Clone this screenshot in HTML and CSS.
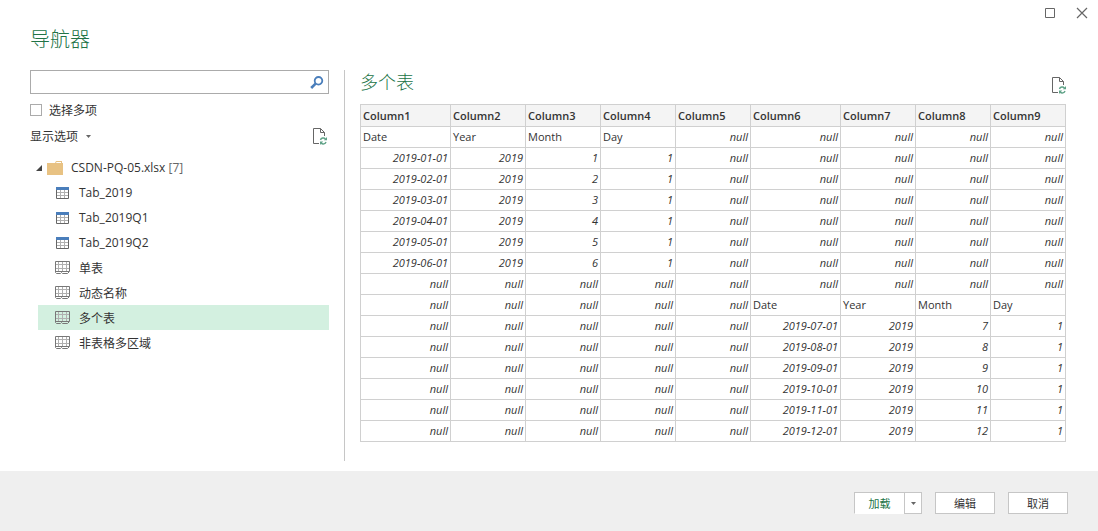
FILE: index.html
```html
<!DOCTYPE html>
<html lang="zh-CN">
<head>
    <meta charset="UTF-8">
    <meta name="viewport" content="width=device-width, initial-scale=1.0">
    <title>导航器</title>
    <link rel="stylesheet" href="styles.css">
</head>
<body>
    <!-- Icons -->
    <svg class="sprite" aria-hidden="true">
        <symbol id="icon-refresh" viewBox="0 0 14 17">
            <path d="M6 15.5H.5V.5H7.5L11.5 4.5V8M7.5 .5V4.5H11.5" fill="none" stroke="#666"/>
            <path d="M7.5 12C8 9.8 11 9.2 12.4 11M13 14C12.4 16 9.6 16.6 8.2 15" fill="none" stroke="#5fa287" stroke-width="1.4"/>
            <path d="M14 9V12.2H10.8ZM7 17V13.6H10.2Z" fill="#5fa287"/>
        </symbol>
        <symbol id="icon-table" viewBox="0 0 13 12">
            <path d="M1 5.5H12M1 8.5H12M4.5 3V11M8.5 3V11" stroke="#b0b0b0" fill="none"/>
            <path d="M.5 3V11.5H12.5V3" stroke="#666" fill="none"/>
            <path d="M0 0H13V3H0Z" fill="#4a7ebb"/>
        </symbol>
        <symbol id="icon-sheet" viewBox="0 0 15 13">
            <path d="M1 3.5H14M1 7.5H14M3.5 1V11M7.5 1V11M11.5 1V11" stroke="#b0b0b0" fill="none"/>
            <path d="M.5 .5H14.5V10.5L12.5 12.5H7.5L6.5 11.5L5.5 12.5H1.5L.5 11.5ZM1 10.5H14" stroke="#777" fill="none"/>
        </symbol>
        <symbol id="icon-down" viewBox="0 0 5 3">
            <path d="M0 0H5L2.5 3Z" fill="#666"/>
        </symbol>
    </svg>

    <header class="titlebar">
        <h1>导航器</h1>
        <div class="window-buttons">
            <button type="button" aria-label="最大化">
                <svg width="10" height="10" viewBox="0 0 10 10"><path d="M.5 .5H9.5V9.5H.5Z" fill="none" stroke="#666"/></svg>
            </button>
            <button type="button" aria-label="关闭">
                <svg width="12" height="12" viewBox="0 0 12 12"><path d="M1 1L11 11M11 1L1 11" fill="none" stroke="#666" stroke-width="1.2"/></svg>
            </button>
        </div>
    </header>

    <main class="main">
        <aside class="sidebar">
            <form class="search">
                <input type="text" aria-label="搜索">
                <button type="submit" aria-label="搜索">
                    <svg width="14" height="13" viewBox="0 0 14 13"><g fill="none" stroke="#4a7ebb"><circle cx="8.5" cy="4.8" r="3.8" stroke-width="1.8"/><path d="M5.6 7.6L1.2 12" stroke-width="2.6"/></g></svg>
                </button>
            </form>
            <label class="multi"><input type="checkbox">选择多项</label>
            <div class="options">
                <button type="button" class="options-menu">显示选项 <svg width="5" height="3"><use href="#icon-down"/></svg></button>
                <button type="button" aria-label="刷新"><svg width="14" height="17"><use href="#icon-refresh"/></svg></button>
            </div>
            <ul class="tree">
                <li class="folder">
                    <svg class="arrow" width="6" height="6" viewBox="0 0 6 6"><path d="M6 0V6H0Z" fill="#444"/></svg>
                    <svg width="16" height="14" viewBox="0 0 16 14"><path d="M0 2H8L9 0H15V2H16V14H0Z" fill="#e8c283"/><path d="M9 2L9.5 1H14V2Z" fill="#fff"/></svg>
                    <span>CSDN-PQ-05.xlsx <span class="count">[7]</span></span>
                </li>
                <li><svg class="icon-table" width="13" height="12"><use href="#icon-table"/></svg>Tab_2019</li>
                <li><svg class="icon-table" width="13" height="12"><use href="#icon-table"/></svg>Tab_2019Q1</li>
                <li><svg class="icon-table" width="13" height="12"><use href="#icon-table"/></svg>Tab_2019Q2</li>
                <li><svg width="15" height="13"><use href="#icon-sheet"/></svg>单表</li>
                <li><svg width="15" height="13"><use href="#icon-sheet"/></svg>动态名称</li>
                <li class="selected"><svg width="15" height="13"><use href="#icon-sheet"/></svg>多个表</li>
                <li><svg width="15" height="13"><use href="#icon-sheet"/></svg>非表格多区域</li>
            </ul>
        </aside>

        <section class="preview">
            <div class="preview-head">
                <h2>多个表</h2>
                <button type="button" aria-label="刷新"><svg width="14" height="17"><use href="#icon-refresh"/></svg></button>
            </div>
            <table>
                <colgroup>
                    <col class="wide"><col><col><col><col><col class="wide"><col><col><col>
                </colgroup>
                <thead>
                    <tr><th>Column1</th><th>Column2</th><th>Column3</th><th>Column4</th><th>Column5</th><th>Column6</th><th>Column7</th><th>Column8</th><th>Column9</th></tr>
                </thead>
                <tbody>
                    <tr><td class="text">Date</td><td class="text">Year</td><td class="text">Month</td><td class="text">Day</td><td>null</td><td>null</td><td>null</td><td>null</td><td>null</td></tr>
                    <tr><td>2019-01-01</td><td>2019</td><td>1</td><td>1</td><td>null</td><td>null</td><td>null</td><td>null</td><td>null</td></tr>
                    <tr><td>2019-02-01</td><td>2019</td><td>2</td><td>1</td><td>null</td><td>null</td><td>null</td><td>null</td><td>null</td></tr>
                    <tr><td>2019-03-01</td><td>2019</td><td>3</td><td>1</td><td>null</td><td>null</td><td>null</td><td>null</td><td>null</td></tr>
                    <tr><td>2019-04-01</td><td>2019</td><td>4</td><td>1</td><td>null</td><td>null</td><td>null</td><td>null</td><td>null</td></tr>
                    <tr><td>2019-05-01</td><td>2019</td><td>5</td><td>1</td><td>null</td><td>null</td><td>null</td><td>null</td><td>null</td></tr>
                    <tr><td>2019-06-01</td><td>2019</td><td>6</td><td>1</td><td>null</td><td>null</td><td>null</td><td>null</td><td>null</td></tr>
                    <tr><td>null</td><td>null</td><td>null</td><td>null</td><td>null</td><td>null</td><td>null</td><td>null</td><td>null</td></tr>
                    <tr><td>null</td><td>null</td><td>null</td><td>null</td><td>null</td><td class="text">Date</td><td class="text">Year</td><td class="text">Month</td><td class="text">Day</td></tr>
                    <tr><td>null</td><td>null</td><td>null</td><td>null</td><td>null</td><td>2019-07-01</td><td>2019</td><td>7</td><td>1</td></tr>
                    <tr><td>null</td><td>null</td><td>null</td><td>null</td><td>null</td><td>2019-08-01</td><td>2019</td><td>8</td><td>1</td></tr>
                    <tr><td>null</td><td>null</td><td>null</td><td>null</td><td>null</td><td>2019-09-01</td><td>2019</td><td>9</td><td>1</td></tr>
                    <tr><td>null</td><td>null</td><td>null</td><td>null</td><td>null</td><td>2019-10-01</td><td>2019</td><td>10</td><td>1</td></tr>
                    <tr><td>null</td><td>null</td><td>null</td><td>null</td><td>null</td><td>2019-11-01</td><td>2019</td><td>11</td><td>1</td></tr>
                    <tr><td>null</td><td>null</td><td>null</td><td>null</td><td>null</td><td>2019-12-01</td><td>2019</td><td>12</td><td>1</td></tr>
                </tbody>
            </table>
        </section>
    </main>

    <footer class="footer">
        <div class="split">
            <button type="button" class="load">加载</button>
            <button type="button" class="drop" aria-label="加载选项"><svg width="5" height="3"><use href="#icon-down"/></svg></button>
        </div>
        <button type="button" class="btn">编辑</button>
        <button type="button" class="btn">取消</button>
    </footer>
</body>
</html>
```
FILE: styles.css
```css
* {
    box-sizing: border-box;
}

body {
    margin: 0;
    min-height: 100vh;
    display: flex;
    flex-direction: column;
    background-color: #fff;
    color: #333;
    font-family: "Open Sans", "Noto Sans CJK SC", sans-serif;
    font-size: 12px;
}

.sprite {
    display: none;
}

svg {
    display: block;
    flex: none;
}

button {
    display: flex;
    align-items: center;
    justify-content: center;
    padding: 0;
    border: 0;
    background: none;
    color: inherit;
    font: inherit;
}

h1, h2 {
    margin: 0;
    color: #217346;
    font-family: "Noto Sans CJK SC", sans-serif;
    font-weight: 300;
}

/* Title bar */
.titlebar {
    display: flex;
    justify-content: space-between;
    align-items: flex-start;
    height: 70px;
    padding: 0 10px 0 30px;
}

h1 {
    padding-top: 25px;
    font-size: 20px;
    line-height: 28px;
}

.window-buttons {
    display: flex;
    gap: 21px;
    padding-top: 7px;
}

.window-buttons button {
    height: 12px;
}

.main {
    flex: 1;
    display: flex;
    padding: 0 32px 10px 30px;
}

/* Left side */
.sidebar {
    flex: 0 0 315px;
    padding-right: 15px;
    border-right: 1px solid #c6c6c6;
}

.search {
    display: flex;
    height: 24px;
    border: 1px solid #ababab;
}

.search input {
    flex: 1;
    min-width: 0;
    padding: 0 4px;
    border: 0;
    outline: 0;
    font: inherit;
}

.search button {
    width: 22px;
}

.multi {
    display: flex;
    align-items: center;
    gap: 7px;
    height: 24px;
    margin-top: 4px;
}

.multi input {
    appearance: none;
    width: 12px;
    height: 12px;
    margin: 0;
    border: 1px solid #ababab;
    background-color: #fff;
}

.options {
    display: flex;
    justify-content: space-between;
    align-items: center;
    height: 28px;
    margin-bottom: 5px;
    padding-right: 2px;
}

.options-menu {
    gap: 8px;
}

.tree {
    margin: 0 0 0 8px;
    padding: 0;
    list-style: none;
}

.tree li {
    display: flex;
    align-items: center;
    gap: 9px;
    height: 25px;
    padding-left: 17px;
}

.tree .folder {
    gap: 8px;
    padding-left: 0;
}

.arrow {
    margin: 0 -3px 0 -2px;
}

.icon-table {
    margin: 0 1px;
}

.tree .selected {
    background-color: #d3f0e0;
}

.count {
    color: #666;
}

/* Preview */
.preview {
    flex: 1;
    padding-left: 15px;
}

.preview-head {
    display: flex;
    justify-content: space-between;
    align-items: center;
    height: 34px;
    padding-bottom: 4px;
}

h2 {
    font-size: 18px;
    line-height: 24px;
    padding-bottom: 8px;
}

table {
    width: 100%;
    table-layout: fixed;
    border-collapse: collapse;
    font-size: 11px;
    line-height: 16px;
}

col {
    width: 75px;
}

col.wide {
    width: 90px;
}

th, td {
    height: 21px;
    padding: 0 2px;
    border: 1px solid #d0d0d0;
    white-space: nowrap;
}

th {
    height: 22px;
    background-color: #f4f4f4;
    font-weight: 600;
    text-align: left;
}

td {
    font-style: italic;
    text-align: right;
}

td.text {
    font-style: normal;
    text-align: left;
}

/* Bottom buttons */
.footer {
    display: flex;
    justify-content: flex-end;
    gap: 13px;
    padding: 21px 30px 17px;
    background-color: #efefef;
    font-size: 11px;
}

.split {
    display: flex;
}

.load, .drop, .btn {
    height: 22px;
    border: 1px solid #c6c6c6;
    background-color: #fff;
}

.load {
    width: 50px;
    border-right: 0;
    border-bottom-color: #fff;
    color: #217346;
}

.drop {
    width: 18px;
}

.btn {
    width: 60px;
}
```
